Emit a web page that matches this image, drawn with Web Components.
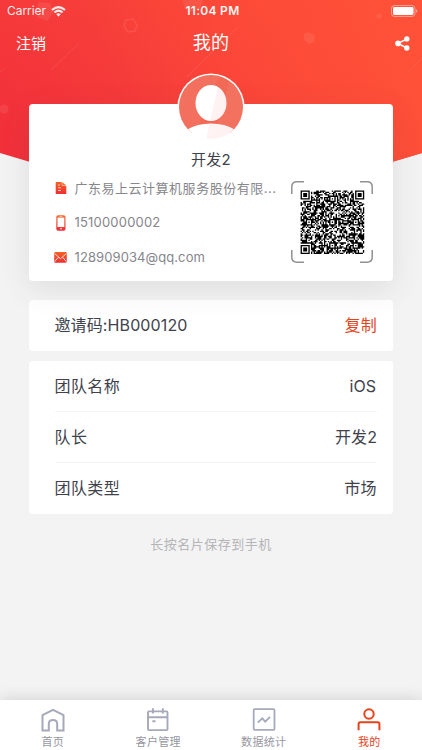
<!DOCTYPE html>
<html lang="zh-CN">
<head>
<meta charset="utf-8">
<title>我的</title>
<style>
html,body{margin:0;height:100%;overflow:hidden}
body{font-family:Inter,"Noto Sans CJK SC",sans-serif;color:#40424b}
</style>
</head>
<body>
<profile-page></profile-page>
<script>
function define(name, html, ready){
  customElements.define(name, class extends HTMLElement{
    connectedCallback(){
      if(this.shadowRoot) return;
      const t=document.createElement('template');
      t.innerHTML=html;
      this.attachShadow({mode:'open'}).append(t.content.cloneNode(true));
      if(ready) ready(this,this.shadowRoot);
    }
  });
}

/* A single line of text tracked to a given width. */
define('tracked-text',`<style>:host{display:block;white-space:nowrap;line-height:1.5}span{display:inline-block}</style><span></span>`,(el,root)=>{
  const s=root.querySelector('span'), text=el.getAttribute('text');
  s.textContent=text;
  const w=parseFloat(el.getAttribute('w'));
  if(w){
    const gap=(w-s.getBoundingClientRect().width)/text.length;
    s.style.letterSpacing=gap.toFixed(3)+'px';
  }
});

define('header-backdrop',`<style>:host{display:block}svg{display:block}</style>
<svg width="422" height="220" viewBox="0 0 422 220">
<defs><linearGradient id="g" gradientUnits="userSpaceOnUse" x1="60" y1="170" x2="205" y2="-40"><stop offset="0" stop-color="#f2303a"/><stop offset=".5" stop-color="#f63c3a"/><stop offset="1" stop-color="#fa4538"/></linearGradient>
<linearGradient id="r" x1="0" x2="1" y1=".6" y2=".4"><stop offset=".3" stop-color="#ff5038" stop-opacity="0"/><stop offset="1" stop-color="#ff5038"/></linearGradient></defs>
<path d="M0 0H422V153L211 216L0 153Z" fill="url(#g)"/><path d="M0 0H422V153L211 216L0 153Z" fill="url(#r)"/>
<g fill="#fff" fill-opacity=".08"><path d="M39 2L50 3L54 12L47 21L37 17L36 8Z"/><path d="M183 0H203L200 9L190 12L184 7Z"/><path d="M304 34L309 32L315 36L314 42L309 44L304 40Z" transform="translate(0 0)"/><circle cx="379" cy="16" r="2.8"/><circle cx="4" cy="109" r="4.5"/></g>
<path d="M126 20L133 19L137 25L135 31L128 32L124 26Z" fill="none" stroke="#fff" stroke-opacity=".09" stroke-width="1.5"/>
<path d="M51 70L79 43M187 77L237 28M409 71L422 58M0 72L4 69" stroke="#fff" stroke-opacity=".09"/>
</svg>`);

define('status-bar',`<style>:host{display:grid;grid-template-columns:1fr auto 1fr;align-items:center;height:22px;padding:0 4px 0 7px;color:#fff;font-size:12px;box-sizing:border-box}
.l{display:flex;align-items:center;gap:5px;opacity:.9}.t{font-weight:600;opacity:.95}.b{justify-self:end;display:block}</style>
<div class="l"><tracked-text text="Carrier" w="39"></tracked-text><svg width="15" height="11" viewBox="0 0 15 11" fill="none" stroke="#fff" stroke-width="2"><path d="M1 4Q7.5-1.8 14 4"/><path d="M3.4 6.5Q7.5 2.8 11.6 6.5"/><path d="M5.2 8.1Q7.5 6.4 9.8 8.1L7.5 10.7Z" fill="#fff" stroke="none"/></svg></div>
<tracked-text class="t" text="11:04 PM" w="54"></tracked-text>
<svg class="b" width="28" height="12" viewBox="0 0 28 12"><rect x="1.5" y=".6" width="23.5" height="10.8" rx="2.8" fill="none" stroke="#fff" stroke-opacity=".45"/><rect x="3" y="2.1" width="20.5" height="7.8" rx="1.4" fill="#fff"/><path d="M26 4.2Q27.4 4.7 27.4 6Q27.4 7.3 26 7.8Z" fill="#fff" fill-opacity=".5"/></svg>`);

define('title-bar',`<style>:host{display:grid;grid-template-columns:1fr auto 1fr;align-items:center;height:42px;padding:0 12px 0 16px;color:#fff;box-sizing:border-box}
.a{font-size:15px;padding-top:2px}.m{font-size:18px;padding:0 4px 1px 0}svg{justify-self:end;display:block}</style>
<tracked-text class="a" text="注销" w="30"></tracked-text><tracked-text class="m" text="我的" w="36.6"></tracked-text>
<svg width="15" height="15" viewBox="0 0 15 15" fill="#fff"><path d="M11.8 3L3 7.4L11.8 12" fill="none" stroke="#fff" stroke-width="1.5"/><circle cx="3" cy="7.4" r="2.8"/><circle cx="11.8" cy="2.9" r="2.7"/><circle cx="11.8" cy="12" r="2.7"/></svg>`);

define('user-avatar',`<style>:host{display:block;width:68px;height:68px}svg{display:block}</style>
<svg width="68" height="68" viewBox="0 0 68 68"><defs><clipPath id="c"><circle cx="34" cy="34" r="32"/></clipPath></defs>
<circle cx="34" cy="34" r="33.6" fill="#fff"/><g clip-path="url(#c)"><rect width="68" height="60" fill="#f26955"/><path d="M0 0H44L15 68H0Z" fill="#fff" fill-opacity=".05"/><path d="M52 9L38 60H68V20Z" fill="#fff" fill-opacity=".06"/>
<ellipse cx="34" cy="30" rx="15.5" ry="18" fill="#fff"/><path d="M0 68V63L10 56.8Q20 50.5 34 50.5Q48 50.5 58 56.8L68 63V68Z" fill="#fff"/>
<path d="M41 14L33 48Q48 48 49.5 30Q49 18 41 14M32.5 50.5L29 68H50L58 57Q48 50 32.5 50.5" fill="#f26955" fill-opacity=".08"/></g></svg>`);

define('contact-line',`<style>:host{display:flex;align-items:center;height:34.5px;font-size:13px;color:#86868b}.i{width:14px;margin-right:7px;height:16px;display:grid;place-items:center}</style>
<div class="i"><slot></slot></div><tracked-text></tracked-text>`,(el,r)=>{
  const t=document.createElement('tracked-text');
  t.setAttribute('text',el.getAttribute('text'));t.setAttribute('w',el.getAttribute('w'));
  r.querySelector('tracked-text').replaceWith(t);
});

define('qr-code',`<style>:host{display:block;width:82px;height:82px}svg{display:block}</style>
<svg width="82" height="82" viewBox="0 0 82 82"><path d="M.8 13V6Q.8 .8 6 .8H13M69 .8H76Q81.2 .8 81.2 6V13M81.2 69V76Q81.2 81.2 76 81.2H69M13 81.2H6Q.8 81.2 .8 76V69" fill="none" stroke="#919193" stroke-width="1.5"/><path class="q"/></svg>`,(el,r)=>{
  const n=49,m=63.6/n,ox=9.6,oy=9.4,al=[6,24,42];
  let seed=90210,d='';
  const ring=(x,y,cx,cy)=>Math.max(Math.abs(x-cx),Math.abs(y-cy));
  for(let y=0;y<n;y++)for(let x=0;x<n;x++){
    seed=(seed*1664525+1013904223)>>>0;
    let on=(seed>>>16)%100<55, fixed=false;
    for(const [cx,cy] of [[3,3],[n-4,3],[3,n-4]]){
      const k=ring(x,y,cx,cy);
      if(k<=4){on=k!==4&&k!==2;fixed=true;}
    }
    if(!fixed){
      for(const cx of al)for(const cy of al){const k=ring(x,y,cx,cy);if(k<=2){on=k!==1;fixed=true;}}
    }
    if(!fixed&&(x===6||y===6))on=(x+y)%2===0;
    if(on)d+='M'+(ox+x*m).toFixed(2)+' '+(oy+y*m).toFixed(2)+'h'+(m+.03).toFixed(2)+'v'+(m+.03).toFixed(2)+'h-'+(m+.03).toFixed(2)+'z';
  }
  r.querySelector('.q').setAttribute('d',d);
});

define('profile-card',`<style>:host{display:block;position:relative;height:177px;background:#fff;border-radius:4px;box-shadow:0 8px 30px rgba(70,70,90,.12);box-sizing:border-box;padding-top:46px}
user-avatar{position:absolute;left:148.3px;top:-31px}
.n{font-size:15px;display:flex;justify-content:center;height:21px;align-items:center;padding-top:0}
.b{display:flex;justify-content:space-between;padding:0 20px 0 24.5px}.q{padding-top:10px}svg{display:block}</style>
<user-avatar></user-avatar><div class="n"><tracked-text text="开发2" w="40"></tracked-text></div>
<div class="b"><div class="c">
<contact-line text="广东易上云计算机服务股份有限..." w="202"><svg width="12" height="14" viewBox="0 0 12 14"><defs><linearGradient id="a" x2="0" y2="1"><stop stop-color="#f36224"/><stop offset="1" stop-color="#f02d32"/></linearGradient></defs><path d="M.7 1H6.8V4.6H10.5Q11.3 4.6 11.3 5.5V13H.7Z" fill="url(#a)"/><path d="M7.3 1.2L10.8 4.1H7.3Z" fill="#f36224"/><path d="M3 4H5M3 6.8H6M3 9.5H6" stroke="#fff" stroke-width=".7"/></svg></contact-line>
<contact-line text="15100000002" w="86"><svg width="10" height="16" viewBox="0 0 10 16"><defs><linearGradient id="b" x2="0" y2="1"><stop stop-color="#f06a30"/><stop offset="1" stop-color="#f02d38"/></linearGradient></defs><rect x=".3" y=".3" width="9.2" height="15.4" rx="1.8" fill="url(#b)"/><path d="M1.5 2.6H8.3V12H1.5Z" fill="#fff"/><circle cx="5" cy="13.8" r=".8" fill="#fff"/><path d="M3.4 1.5H6.5" stroke="#fff" stroke-width=".5"/></svg></contact-line>
<contact-line text="128909034@qq.com" w="130.5"><svg width="13" height="11" viewBox="0 0 13 11"><defs><linearGradient id="d" x2="0" y2="1"><stop stop-color="#f36224"/><stop offset="1" stop-color="#f02d32"/></linearGradient></defs><rect x=".2" y=".1" width="12.6" height="10.7" rx="1.2" fill="url(#d)"/><path d="M.6 1.5L6.5 6.7L12.4 1.5M.6 9.7L4.5 5.1M12.4 9.7L8.5 5.1" fill="none" stroke="#fff" stroke-width=".8"/></svg></contact-line>
</div><div class="q"><qr-code></qr-code></div></div>`);

define('info-card',`<style>:host{display:block;background:#fff;border-radius:4px;padding:0 16px 0 25.5px}</style><slot></slot>`);

define('info-row',`<style>:host{display:flex;justify-content:space-between;align-items:center;height:51px;font-size:16px;box-sizing:border-box;border-bottom:1px solid #f4f4f5}:host([last]){border-color:transparent}</style><slot></slot>`);

define('tab-item',`<style>:host{display:flex;flex-direction:column;align-items:center;gap:2px;padding-top:8px;color:#a6a9bb;font-size:11px}:host([active]){color:#e6431c}svg{display:block}.x{color:#97979f}:host([active]) .x{color:#e6431c}</style><slot></slot><div class="x"></div>`,(el,r)=>{
  const t=document.createElement('tracked-text');t.setAttribute('text',el.getAttribute('label'));t.setAttribute('w',el.getAttribute('w'));r.querySelector('.x').append(t);
});

define('tab-bar',`<style>:host{display:grid;grid-template-columns:repeat(4,1fr);height:50px;background:#fff;box-shadow:0 -2px 14px rgba(0,0,0,.12)}svg{display:block}</style>
<tab-item label="首页" w="22.4"><svg width="24" height="24" viewBox="0 0 24 24" fill="none" stroke="currentColor" stroke-width="2"><path d="M1.5 22.4V7L12 1.8L22.5 7V22.4H16.2V16Q16.2 12 12 12Q7.8 12 7.8 16V22.4Z"/></svg></tab-item>
<tab-item label="客户管理" w="45.4"><svg width="24" height="24" viewBox="0 0 24 24" fill="none" stroke="currentColor" stroke-width="1.9"><rect x="2" y="3.4" width="19.5" height="18.7" rx="1"/><path d="M2 9.2H21.5M7 .3V5.5M16.8 .3V5.5M6.4 13.2H9.5"/></svg></tab-item>
<tab-item label="数据统计" w="45.4"><svg width="24" height="24" viewBox="0 0 24 24" fill="none" stroke="currentColor" stroke-width="1.8"><rect x="1.7" y="1.2" width="20.8" height="20.6" rx="1"/><path d="M5.8 14.6L10.3 10.3L13.2 13.6L18.1 8.8"/></svg></tab-item>
<tab-item active label="我的" w="22.4"><svg width="24" height="24" viewBox="0 0 24 24" fill="none" stroke="currentColor" stroke-width="2"><circle cx="12" cy="6" r="4.7"/><path d="M1.6 22.3V16Q1.6 14.2 3.2 14.2H20.8Q22.4 14.2 22.4 16V22.3"/></svg></tab-item>`);

define('profile-page',`<style>:host{display:flex;flex-direction:column;position:relative;width:422px;height:750px;background:#f3f3f3;overflow:hidden}
header-backdrop{position:absolute;left:0;top:0}
status-bar,title-bar,main{position:relative}
main{flex:1;display:flex;flex-direction:column;padding:40px 29px 0}
.i{margin-top:19px;margin-bottom:10px}.copy{color:#e6431c}.os{padding-right:1px}
.hint{align-self:center;margin-top:21px;font-size:13px;color:#b5b5b8}tab-bar{position:relative}</style>
<header-backdrop></header-backdrop><status-bar></status-bar><title-bar></title-bar>
<main><profile-card></profile-card>
<info-card class="i"><info-row last><tracked-text text="邀请码:HB000120" w="133"></tracked-text><tracked-text class="copy" text="复制" w="32.4"></tracked-text></info-row></info-card>
<info-card><info-row><tracked-text text="团队名称" w="65.6"></tracked-text><tracked-text class="os" text="iOS" w="26.5"></tracked-text></info-row><info-row><tracked-text text="队长" w="32.8"></tracked-text><tracked-text text="开发2" w="42"></tracked-text></info-row><info-row last><tracked-text text="团队类型" w="65.6"></tracked-text><tracked-text text="市场" w="32.8"></tracked-text></info-row></info-card>
<tracked-text class="hint" text="长按名片保存到手机" w="121.5"></tracked-text></main>
<tab-bar></tab-bar>`);
</script>
</body>
</html>
